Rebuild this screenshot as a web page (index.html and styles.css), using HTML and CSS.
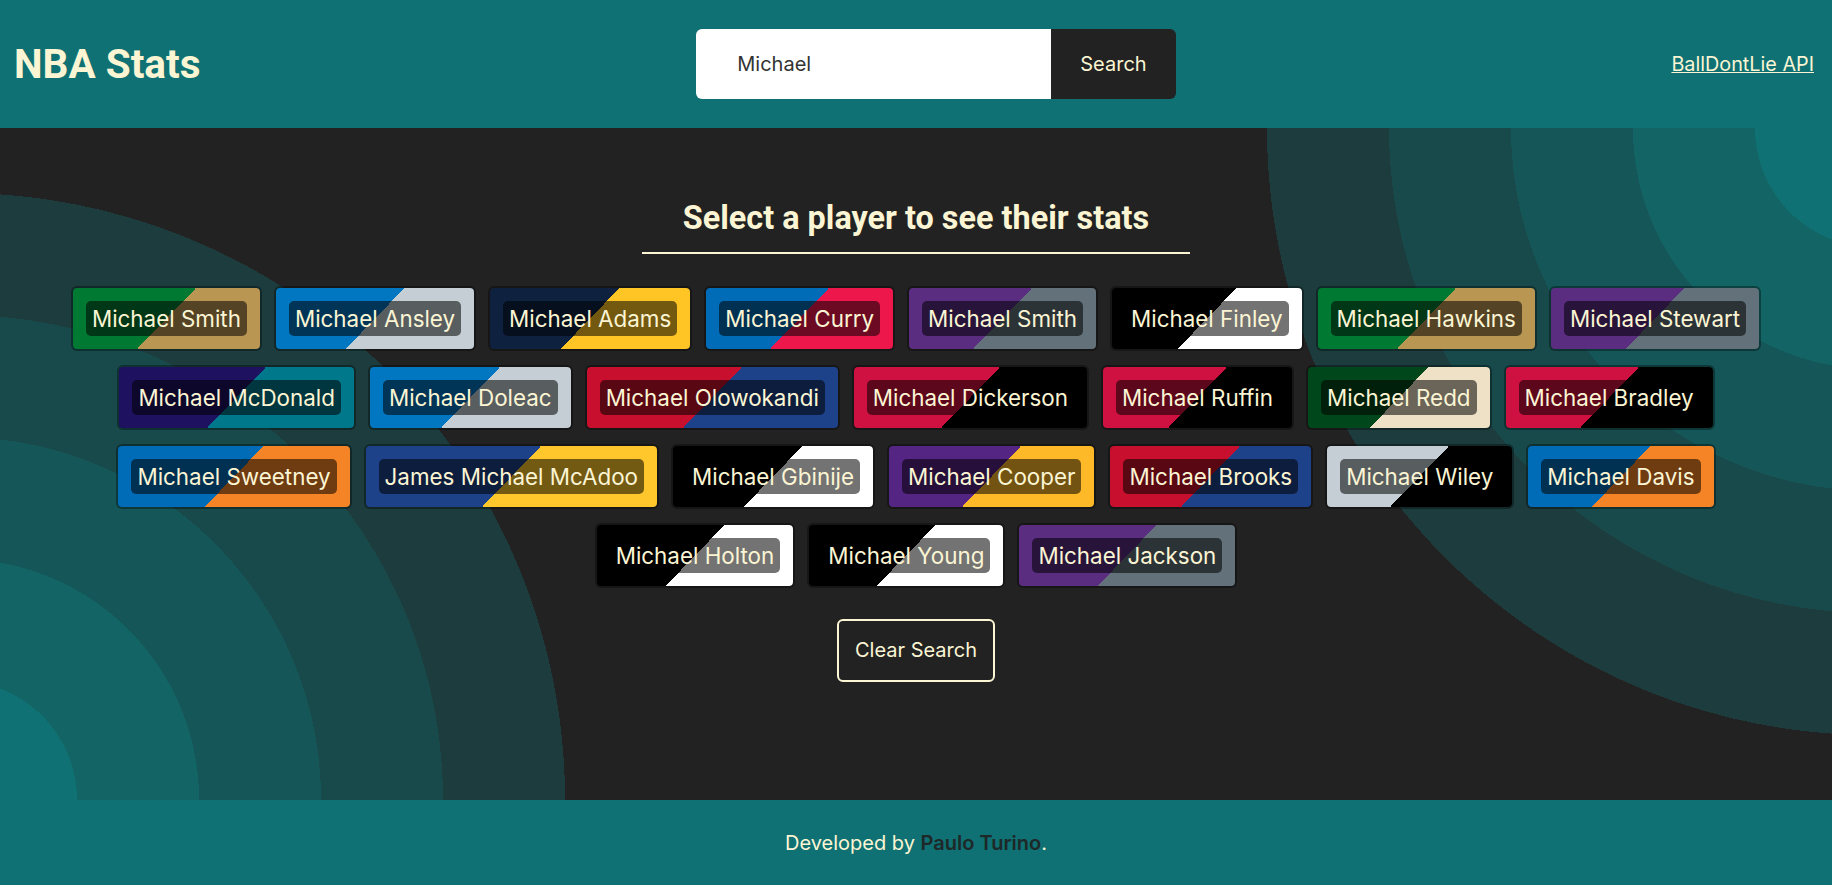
FILE: index.html
```html
<!DOCTYPE html>
<html lang="en">
<head>
<meta charset="utf-8">
<title>NBA Stats</title>
<link rel="stylesheet" href="styles.css">
</head>
<body>
<header class="topbar">
  <h1 class="brand">NBA Stats</h1>
  <form class="search">
    <input class="search-input" type="text" value="Michael">
    <button class="search-btn" type="button">Search</button>
  </form>
  <a class="api-link" href="#">BallDontLie API</a>
</header>
<main class="content">
  <h2 class="title">Select a player to see their stats</h2>
  <div class="players">
    <button class="player bos"><span class="label">Michael Smith</span></button>
    <button class="player orl"><span class="label">Michael Ansley</span></button>
    <button class="player den"><span class="label">Michael Adams</span></button>
    <button class="player phi"><span class="label">Michael Curry</span></button>
    <button class="player sac"><span class="label">Michael Smith</span></button>
    <button class="player bkn"><span class="label">Michael Finley</span></button>
    <button class="player bos"><span class="label">Michael Hawkins</span></button>
    <button class="player sac"><span class="label">Michael Stewart</span></button>
    <button class="player cha"><span class="label">Michael McDonald</span></button>
    <button class="player orl"><span class="label">Michael Doleac</span></button>
    <button class="player lac"><span class="label">Michael Olowokandi</span></button>
    <button class="player tor"><span class="label">Michael Dickerson</span></button>
    <button class="player tor"><span class="label">Michael Ruffin</span></button>
    <button class="player mil"><span class="label">Michael Redd</span></button>
    <button class="player tor"><span class="label">Michael Bradley</span></button>
    <button class="player nyk"><span class="label">Michael Sweetney</span></button>
    <button class="player gsw"><span class="label">James Michael McAdoo</span></button>
    <button class="player bkn"><span class="label">Michael Gbinije</span></button>
    <button class="player lal"><span class="label">Michael Cooper</span></button>
    <button class="player lac"><span class="label">Michael Brooks</span></button>
    <button class="player sas"><span class="label">Michael Wiley</span></button>
    <button class="player nyk"><span class="label">Michael Davis</span></button>
    <button class="player bkn"><span class="label">Michael Holton</span></button>
    <button class="player bkn"><span class="label">Michael Young</span></button>
    <button class="player sac"><span class="label">Michael Jackson</span></button>
  </div>
  <button class="clear-btn" type="button">Clear Search</button>
</main>
<footer class="footer">
  <p class="credit">Developed by <a class="author" href="#">Paulo Turino</a>.</p>
</footer>
</body>
</html>
```

FILE: styles.css
```css
* { box-sizing: border-box; }

html, body { margin: 0; padding: 0; }

body {
  min-height: 100vh;
  display: flex;
  flex-direction: column;
  font-family: "Inter", "Noto Sans", sans-serif;
  color: #fbf5d4;
  background: #222222;
}

.topbar {
  height: 128px;
  flex: 0 0 128px;
  background: #0f7173;
  display: flex;
  align-items: center;
  justify-content: space-between;
  padding: 0 18px 0 14px;
}

.brand {
  margin: 0;
  font-family: "Roboto", "Liberation Sans", sans-serif;
  font-weight: 700;
  font-size: 40.5px;
  line-height: 48px;
  color: #fbf5d4;
}

.search {
  display: flex;
  height: 70px;
  border-radius: 6px;
  overflow: hidden;
}

.search-input {
  width: 355px;
  height: 70px;
  border: 0;
  outline: none;
  padding: 0 0 0 41px;
  font-family: "Inter", sans-serif;
  font-size: 20px;
  color: #333333;
  background: #ffffff;
}

.search-btn {
  height: 70px;
  border: 0;
  padding: 0 29px;
  background: #222222;
  color: #fbf5d4;
  font-family: "Inter", sans-serif;
  font-size: 20px;
  cursor: pointer;
}

.api-link {
  font-size: 19.8px;
  color: #fbf5d4;
  text-decoration: underline;
}

.content {
  flex: 1 1 auto;
  display: flex;
  flex-direction: column;
  align-items: center;
  padding-top: 72px;
  background:
    radial-gradient(circle at -42px 100%,
      #0f7173 0 119px, #126465 119px 241px, #155758 241px 363px,
      #184a4b 363px 485px, #1c3c3d 485px 607px, transparent 607px),
    radial-gradient(circle at calc(100% + 42px) 0,
      #0f7173 0 119px, #126465 119px 241px, #155758 241px 363px,
      #184a4b 363px 485px, #1c3c3d 485px 607px, transparent 607px),
    #222222;
}

.title {
  margin: 0;
  font-family: "Roboto", "Liberation Sans", sans-serif;
  font-weight: 700;
  font-size: 32.4px;
  line-height: 37px;
  color: #fbf5d4;
  padding: 0 41px 15px;
  border-bottom: 2px solid #fbf5d4;
}

.players {
  margin-top: 32px;
  width: 100%;
  padding: 0 42px;
  display: flex;
  flex-wrap: wrap;
  justify-content: center;
  gap: 14px 12px;
}

.player {
  --c1: #000;
  --c2: #fff;
  padding: 13px;
  border: 2px solid rgba(0, 0, 0, 0.35);
  border-radius: 6px;
  background: linear-gradient(134deg, var(--c1) 50%, var(--c2) 50%);
  background-clip: padding-box;
  cursor: pointer;
  font: inherit;
}

.label {
  display: block;
  padding: 4px 6px;
  border-radius: 5px;
  background: rgba(0, 0, 0, 0.55);
  color: #fbf5d4;
  font-family: "Inter", sans-serif;
  font-size: 22.4px;
  line-height: 27px;
  white-space: nowrap;
}

.bos { --c1: #007a33; --c2: #ba9653; }
.orl { --c1: #0077c0; --c2: #c4ced4; }
.den { --c1: #0e2240; --c2: #fec524; }
.phi { --c1: #006bb6; --c2: #ed174c; }
.sac { --c1: #5a2d81; --c2: #63727a; }
.bkn { --c1: #000000; --c2: #ffffff; }
.cha { --c1: #1d1160; --c2: #00788c; }
.lac { --c1: #c8102e; --c2: #1d428a; }
.tor { --c1: #ce1141; --c2: #000000; }
.mil { --c1: #00471b; --c2: #eee1c6; }
.nyk { --c1: #006bb6; --c2: #f58426; }
.gsw { --c1: #1d428a; --c2: #ffc72c; }
.lal { --c1: #552583; --c2: #fdb927; }
.sas { --c1: #c4ced4; --c2: #000000; }

.clear-btn {
  margin-top: 31px;
  padding: 18px 16px;
  border: 2px solid #fbf5d4;
  border-radius: 6px;
  background: transparent;
  color: #fbf5d4;
  font-family: "Inter", sans-serif;
  font-size: 20px;
  line-height: 23px;
  cursor: pointer;
}

.footer {
  flex: 0 0 85px;
  height: 85px;
  background: #0f7173;
  display: flex;
  align-items: center;
  justify-content: center;
}

.credit {
  margin: 0;
  font-size: 20px;
  color: #fbf5d4;
}

.author {
  color: #1e2828;
  font-weight: 600;
  text-decoration: none;
}
```
